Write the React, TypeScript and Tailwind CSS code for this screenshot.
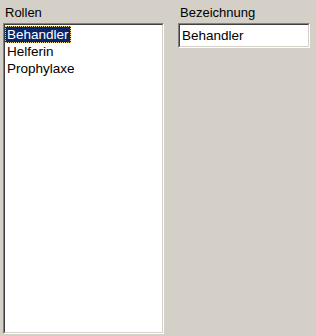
export default function App() {
  const roles = ["Behandler", "Helferin", "Prophylaxe"];
  const selected = 0;

  return (
    <div
      className="w-[316px] h-[336px] bg-[#d4d0c8] flex gap-[14px] pl-[3px] text-[13px] text-black leading-none"
      style={{ fontFamily: '"Liberation Sans", Arial, sans-serif' }}
    >
      <div className="w-[161px] flex flex-col pb-[2px]">
        <div className="pl-[2px] pt-[6px] h-[23px]">Rollen</div>
        <div className="flex-1 border-t border-l border-t-[#808080] border-l-[#808080] border-b border-r border-b-white border-r-white">
          <div className="h-full border-t border-l border-t-[#404040] border-l-[#404040] border-b border-r border-b-[#d4d0c8] border-r-[#d4d0c8] bg-white pt-px text-[13.5px]">
            {roles.map((r, i) => (
              <div key={r} className="h-[17px] flex">
                {i === selected ? (
                  <span className="h-[17px] px-px flex items-center bg-[#0a246a] text-white border border-dotted border-[#e8d48a]">
                    {r}
                  </span>
                ) : (
                  <span className="h-[17px] px-[2px] flex items-center">{r}</span>
                )}
              </div>
            ))}
          </div>
        </div>
      </div>
      <div className="w-[132px] flex flex-col">
        <div className="pl-[2px] pt-[6px] h-[23px]">Bezeichnung</div>
        <div className="h-[25px] border-t border-l border-t-[#808080] border-l-[#808080] border-b border-r border-b-white border-r-white">
          <div className="h-full border-t border-l border-t-[#404040] border-l-[#404040] border-b border-r border-b-[#d4d0c8] border-r-[#d4d0c8] bg-white pl-[2px] flex items-center text-[13.5px]">
            Behandler
          </div>
        </div>
      </div>
    </div>
  );
}
